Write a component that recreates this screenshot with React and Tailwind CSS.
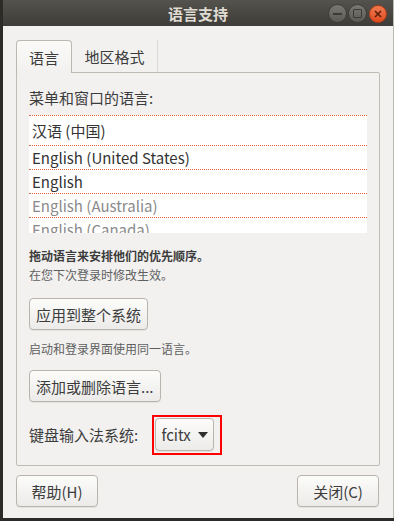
import { useState } from "react";

const font = { fontFamily: '"Noto Sans CJK SC", "Noto Sans", sans-serif' };

const langs = [
	{ name: "汉语 (中国)", dim: false, tall: true },
	{ name: "English (United States)", dim: false },
	{ name: "English", dim: false },
	{ name: "English (Australia)", dim: true },
	{ name: "English (Canada)", dim: true },
];

function Btn({ children, className = "" }) {
	return (
		<button
			className={`rounded-[4px] border border-[#b9b5ae] bg-gradient-to-b from-[#fcfcfb] to-[#ecebe9] shadow-[0_1px_0_rgba(0,0,0,0.06)] text-[15px] leading-none text-[#3c3c3c] ${className}`}
		>
			{children}
		</button>
	);
}

function TitleButtons() {
	return (
		<div className="absolute right-[6px] top-[4px] flex items-center gap-[1px]">
			<div className="w-[19px] h-[19px] rounded-full bg-gradient-to-b from-[#7a7872] to-[#5c5a55] border border-[#3e3d39] flex items-center justify-center">
				<div className="w-[9px] h-[2px] bg-[#3b3a36]" />
			</div>
			<div className="w-[19px] h-[19px] rounded-full bg-gradient-to-b from-[#7a7872] to-[#5c5a55] border border-[#3e3d39] flex items-center justify-center">
				<div className="w-[9px] h-[9px] border-[1.5px] border-[#3b3a36] rounded-[1px]" />
			</div>
			<div className="ml-[1px] w-[18px] h-[18px] rounded-full bg-gradient-to-b from-[#f27a50] to-[#df4a1c] border border-[#b33d16] flex items-center justify-center">
				<svg width="8" height="8" viewBox="0 0 8 8">
					<path d="M1 1 L7 7 M7 1 L1 7" stroke="#5a1f0d" strokeWidth="1.6" />
				</svg>
			</div>
		</div>
	);
}

export default function App() {
	const [tab, setTab] = useState(0);

	return (
		<div className="w-[394px] h-[521px] bg-[#2c2b28] flex overflow-hidden" style={font}>
			<div className="ml-[3px] w-[391px] h-[518px] flex flex-col bg-[#f2f1f0] border-r border-[#bdbab4]">
				{/* title bar */}
				<div className="relative h-[26px] shrink-0 bg-gradient-to-b from-[#55534e] to-[#3d3c38] flex items-center justify-center">
					<span className="text-[15px] font-bold text-[#dfdbd2] leading-none">语言支持</span>
					<TitleButtons />
				</div>

				<div className="flex flex-col px-[13px] pt-[14px]">
					{/* tabs */}
					<div className="flex h-[33px] -mb-[1px] relative z-10">
						<button
							onClick={() => setTab(0)}
							className="w-[56px] h-[33px] rounded-t-[4px] border border-b-0 border-[#bcb8b1] bg-gradient-to-b from-[#fafaf9] to-[#f2f1f0] text-[15px] text-[#3c3c3c] leading-none"
						>
							语言
						</button>
						<button
							onClick={() => setTab(1)}
							className="w-[86px] h-[32px] border-r border-[#dcdad6] text-[15px] text-[#3c3c3c] leading-none pt-[1px]"
						>
							地区格式
						</button>
					</div>

					{/* panel */}
					<div className="h-[394px] border border-[#c0bcb5] rounded-[2px] px-[12px] pt-[15px] flex flex-col">
						<div className="text-[15px] leading-[20px] text-[#3c3c3c]">菜单和窗口的语言:</div>

						<div className="mt-[7px] w-[338px] h-[118px] bg-white overflow-hidden">
							{langs.map((l) => (
								<div
									key={l.name}
									className={`box-border border-t border-dotted border-[#e0693c] px-[3px] flex items-center text-[15px] leading-none ${
										l.tall ? "h-[30px]" : "h-[24px]"
									} ${l.dim ? "text-[#8a8a8a]" : "text-[#333333]"}`}
								>
									{l.name}
								</div>
							))}
						</div>

						<div className="mt-[14px] text-[12px] leading-[17px] font-bold text-[#3c3c3c]">
							拖动语言来安排他们的优先顺序。
						</div>
						<div className="mt-[2px] text-[12px] leading-[17px] text-[#5f5f5f]">在您下次登录时修改生效。</div>

						<div className="mt-[15px] flex">
							<Btn className="h-[32px] px-[6px]">应用到整个系统</Btn>
						</div>

						<div className="mt-[10px] text-[12px] leading-[17px] text-[#5f5f5f]">启动和登录界面使用同一语言。</div>

						<div className="mt-[13px] flex">
							<Btn className="h-[32px] px-[6px]">添加或删除语言...</Btn>
						</div>

						<div className="mt-[13px] flex items-center">
							<span className="text-[15px] leading-[20px] text-[#3c3c3c]">键盘输入法系统:</span>
							<div className="ml-[14px] border-2 border-[#ff0000] pt-[1px] pb-[2px] pl-[1px] pr-[6px]">
								<Btn className="h-[33px] w-[59px] flex items-center justify-center gap-[7px]">
									<span>fcitx</span>
									<svg width="10" height="6" viewBox="0 0 10 6">
										<path d="M0 0 H10 L5 6 Z" fill="#2e2e2e" />
									</svg>
								</Btn>
							</div>
						</div>
					</div>

					{/* bottom buttons */}
					<div className="mt-[9px] flex justify-between">
						<Btn className="h-[32px] w-[82px] text-[#2d7cc0]">帮助(H)</Btn>
						<Btn className="h-[32px] w-[82px] mr-[1px]">关闭(C)</Btn>
					</div>
				</div>
			</div>
		</div>
	);
}
